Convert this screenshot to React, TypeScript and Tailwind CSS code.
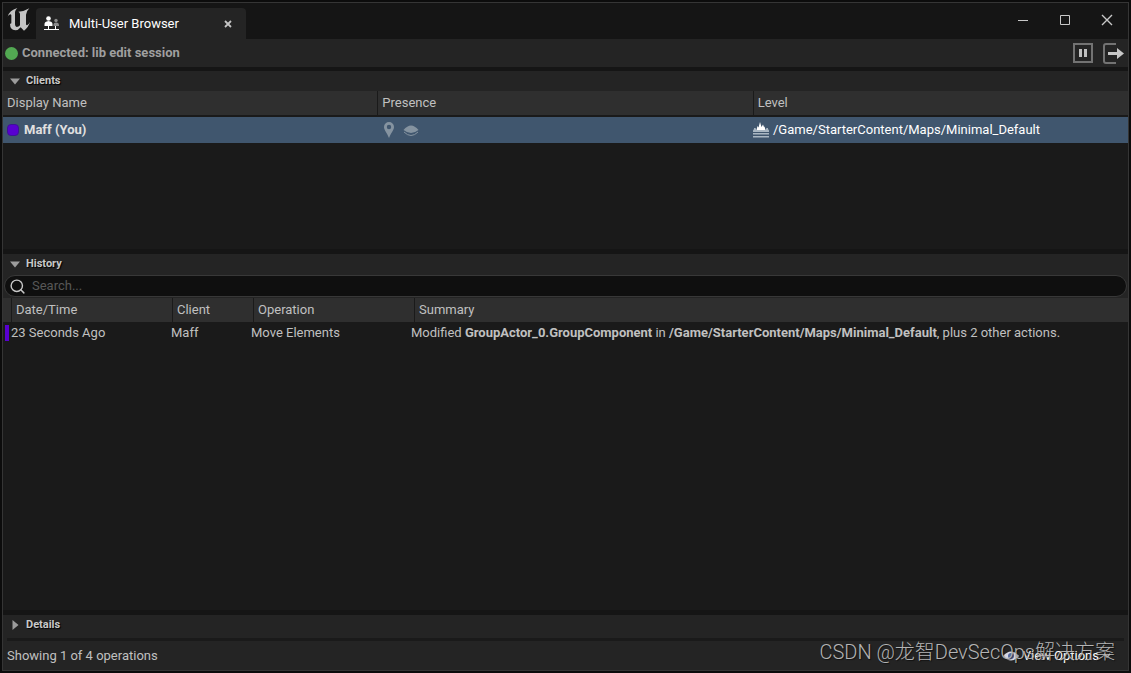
import { Search } from "lucide-react";
import type { ReactNode } from "react";

const clients = [
  { name: "Maff (You)", level: "/Game/StarterContent/Maps/Minimal_Default" },
];

const history = [
  {
    time: "23 Seconds Ago",
    client: "Maff",
    operation: "Move Elements",
    actor: "GroupActor_0.GroupComponent",
    level: "/Game/StarterContent/Maps/Minimal_Default",
    extra: ", plus 2 other actions.",
  },
];

function EngineLogo() {
  return (
    <svg className="h-6 w-6" viewBox="22 22 72 72" fill="#c4c4c4">
      <path d="M24 51 Q29 32 53 25 Q46 32 46 37 L46 74 Q46 81 51 82 Q57 82 61 77 L61 43 Q61 38 56 36 Q73 36 89 26 Q79 36 79 45 L79 73 Q79 77 82 77 Q87 75 91 67 Q87 82 73 93 L63 83 Q56 92 47 92 Q31 90 31 73 L35 71 L35 47 Q34 42 29 45 Q26 47 24 51Z" />
    </svg>
  );
}

function UsersIcon() {
  return (
    <svg className="h-4 w-4" viewBox="0 0 16 16">
      <g fill="#fff">
        <circle cx="4.5" cy="2.5" r="2.3" />
        <path d="M.5 10V8q0-2.500 4-3Q8.500 5.500 8.500 8v2z" />
        <path d="M0 13h15v1H0zM4 10h1v3H4zM11 10h1v3h-1z" />
      </g>
      <g fill="#8a8a8a">
        <circle cx="12" cy="4.500" r="1.700" />
        <path d="M9.500 10V8.500q0-1.800 2.500-2t3 2V10z" />
      </g>
    </svg>
  );
}

function LevelIcon() {
  return (
    <svg className="h-4 w-4 shrink-0" viewBox="0 0 16 16">
      <path fill="#fff" d="M3.500 8 4.500 4l1 1.500L7 0l1.500 5L10 2.500l1 2.500.500-.500L12.500 8z" />
      <path fill="#a9b6c2" d="M1 6h1.500L3.500 8h9L13.500 6H15v1l1 1.500v1.500H0V8.500L1 7zM0 11h16v1.500H0zM0 14h16v1.500H0z" />
    </svg>
  );
}

function PinIcon() {
  return (
    <svg className="h-4 w-4" viewBox="0 0 16 16" fill="#8593a0">
      <path
        fillRule="evenodd"
        d="M8 0a5 5 0 0 1 5 5c0 3-3 6-5 11C6 11 3 8 3 5a5 5 0 0 1 5-5zm0 2.800a2.200 2.200 0 1 0 0 4.400 2.200 2.200 0 0 0 0-4.400z"
      />
    </svg>
  );
}

function ViewIcon() {
  return (
    <svg className="h-4 w-4" viewBox="0 0 16 16" fill="none">
      <path fill="#8593a0" d="M.5 8Q8-1 15.500 8 8 14 .5 8z" />
      <path stroke="#8593a0" d="M1 10q7 7 14 0" />
    </svg>
  );
}

function PanelTitle({ children, open = true }: { children: ReactNode; open?: boolean }) {
  return (
    <button
      type="button"
      aria-expanded={open}
      className="flex h-5 w-full items-center gap-1.5 bg-[#242424] pl-[7px] text-left text-[11px] font-bold text-[#c8c8c8] [text-shadow:1px_1px_1px_#000]"
    >
      <svg className="h-[10px] w-[10px]" viewBox="0 0 10 10" fill="#9c9c9c">
        {open ? <path d="M0 2.500h10L5 8.500z" /> : <path d="M2.500 0v10L8.500 5z" />}
      </svg>
      {children}
    </button>
  );
}

function HeadCell({ children }: { children?: ReactNode }) {
  return (
    <th scope="col" className="bg-[#2f2f2f] pl-1 text-left font-normal leading-6">
      {children}
    </th>
  );
}

export default function App() {
  return (
    <div className="flex min-h-screen bg-[#0c0c0c] p-0.5 font-[Roboto,sans-serif] text-[13px] text-[#c0c0c0]">
      <main className="relative flex flex-1 flex-col border border-[#353535] bg-[#151515]">
        <header className="flex h-9 items-end justify-between">
          <div className="flex items-end">
            <div className="flex h-9 w-[33px] items-center pb-1 pl-1">
              <EngineLogo />
            </div>
            <div className="flex h-[31px] w-[210px] items-center rounded-t bg-[#242424] pl-2 pr-3 text-white">
              <UsersIcon />
              <span className="flex-1 pl-[9px]">Multi-User Browser</span>
              <button type="button" aria-label="Close tab" className="p-0.5">
                <svg className="h-2 w-2" viewBox="0 0 8 8" stroke="#c4c4c4" strokeWidth="1.800">
                  <path d="M1 1l6 6M7 1L1 7" />
                </svg>
              </button>
            </div>
          </div>
          <div className="flex h-9 items-center gap-[30px] pb-0.5 pr-[15px]">
            <button type="button" aria-label="Minimize">
              <svg className="h-3 w-3" viewBox="0 0 12 12" stroke="#c8c8c8">
                <path d="M1 6.500h10" />
              </svg>
            </button>
            <button type="button" aria-label="Maximize">
              <svg className="h-3 w-3" viewBox="0 0 12 12" stroke="#c8c8c8" fill="none">
                <path d="M1.500 1.500h9v9h-9z" />
              </svg>
            </button>
            <button type="button" aria-label="Close">
              <svg className="h-3 w-3" viewBox="0 0 12 12" stroke="#c8c8c8" strokeWidth="1.400">
                <path d="M1 1l10 10M11 1L1 11" />
              </svg>
            </button>
          </div>
        </header>

        <div className="flex h-7 items-center bg-[#242424] pl-0.5 pr-1">
          <span className="mr-1 h-[13px] w-[13px] rounded-full bg-[#52a852]" />
          <p className="flex-1 font-bold text-[#9f9f9f]">Connected: lib edit session</p>
          <button type="button" aria-label="Pause session" className="mr-2.5">
            <svg className="h-5 w-5" viewBox="0 0 20 20" fill="none">
              <path stroke="#737373" strokeWidth="2" d="M1 1h18v18H1z" />
              <path fill="#c0c0c0" d="M6 6h3v8H6zM11 6h3v8h-3z" />
            </svg>
          </button>
          <button type="button" aria-label="Leave session">
            <svg className="h-[21px] w-[21px]" viewBox="0 0 21 21" fill="none">
              <path stroke="#737373" strokeWidth="2" d="M13 1H3Q1 1 1 3v15q0 2 2 2h10" />
              <path fill="#c8c8c8" d="M5 9h9V5l7 5.500-7 5.500v-4H5z" />
            </svg>
          </button>
        </div>

        {/* Clients */}
        <section className="mt-1 flex flex-col">
          <PanelTitle>Clients</PanelTitle>
          <table className="block">
            <thead className="block bg-[#1a1a1a]">
              <tr className="grid grid-cols-3 gap-px">
                <HeadCell>Display Name</HeadCell>
                <HeadCell>Presence</HeadCell>
                <HeadCell>Level</HeadCell>
              </tr>
            </thead>
            <tbody className="block border-t-2 border-[#1a1a1a]">
              {clients.map((client) => (
                <tr key={client.name} className="grid h-[26px] grid-cols-3 bg-[#40566e] pb-px">
                  <td className="flex items-center gap-[5px] pl-1 font-bold text-[#e0e0e0]">
                    <span className="h-3 w-3 rounded-sm border border-[#3d1296] bg-[#5800d0]" />
                    {client.name}
                  </td>
                  <td className="flex items-center gap-1.5 pl-[3px]">
                    <PinIcon />
                    <ViewIcon />
                  </td>
                  <td className="flex items-center gap-1 text-white">
                    <LevelIcon />
                    {client.level}
                  </td>
                </tr>
              ))}
            </tbody>
          </table>
        </section>
        <div className="flex-[2] bg-[#1a1a1a]" />

        {/* History */}
        <section className="mt-[5px] flex flex-col">
          <PanelTitle>History</PanelTitle>
          <div className="bg-[#242424] px-px pb-px pt-px">
            <label className="flex h-[22px] items-center gap-1.5 rounded-full border border-[#383838] bg-[#0f0f0f] pl-1">
              <Search className="h-[17px] w-[17px] text-[#c8c8c8]" />
              <input
                type="text"
                aria-label="Search"
                placeholder="Search..."
                className="flex-1 bg-transparent pb-0.5 outline-none placeholder:text-[#575757]"
              />
            </label>
          </div>
          <table className="block">
            <thead className="block bg-[#1a1a1a]">
              <tr className="grid grid-cols-[8px_160px_80px_160px_1fr] gap-px">
                <td className="bg-[#2f2f2f]" />
                <HeadCell>Date/Time</HeadCell>
                <HeadCell>Client</HeadCell>
                <HeadCell>Operation</HeadCell>
                <HeadCell>Summary</HeadCell>
              </tr>
            </thead>
            <tbody className="block bg-[#1a1a1a]">
              {history.map((row) => (
                <tr key={row.time} className="grid h-[22px] grid-cols-[8px_160px_80px_160px_1fr] items-center pb-px">
                  <td className="pl-0.5">
                    <div className="h-4 w-1 bg-[#5800d0]" />
                  </td>
                  <td>{row.time}</td>
                  <td>{row.client}</td>
                  <td>{row.operation}</td>
                  <td>
                    Modified <b>{row.actor}</b> in <b>{row.level}</b>
                    {row.extra}
                  </td>
                </tr>
              ))}
            </tbody>
          </table>
        </section>
        <div className="flex-[5] bg-[#1a1a1a]" />

        {/* Details */}
        <section className="mt-[5px] bg-[#242424] pb-[3px]">
          <PanelTitle open={false}>Details</PanelTitle>
        </section>

        <footer className="bg-[#242424]">
          <div className="mx-1 h-[3px] bg-[#1a1a1a]" />
          <div className="flex h-[29px] items-center justify-between pl-1 pr-[17px]">
            <p>Showing 1 of 4 operations</p>
            <button type="button" className="flex items-center gap-1 text-white">
              <svg className="h-4 w-4" viewBox="0 0 16 16">
                <path fill="#d5d8e4" d="M0 8Q8-1 16 8 8 17 0 8z" />
                <circle cx="8" cy="8" r="3" fill="#56689c" />
              </svg>
              View Options
              <svg className="h-2 w-2" viewBox="0 0 8 8" fill="none" stroke="#fff" strokeWidth="1.500">
                <path d="M1 2l3 3 3-3" />
              </svg>
            </button>
          </div>
        </footer>

        <p className="pointer-events-none absolute bottom-1 right-[13px] whitespace-nowrap font-[Roboto,'Noto_Sans_CJK_SC',sans-serif] text-[20px] font-light leading-7 text-[#b4b4b4] [text-shadow:1px_1px_1px_#0008]">
          CSDN @龙智DevSecOps解决方案
        </p>
      </main>
    </div>
  );
}
